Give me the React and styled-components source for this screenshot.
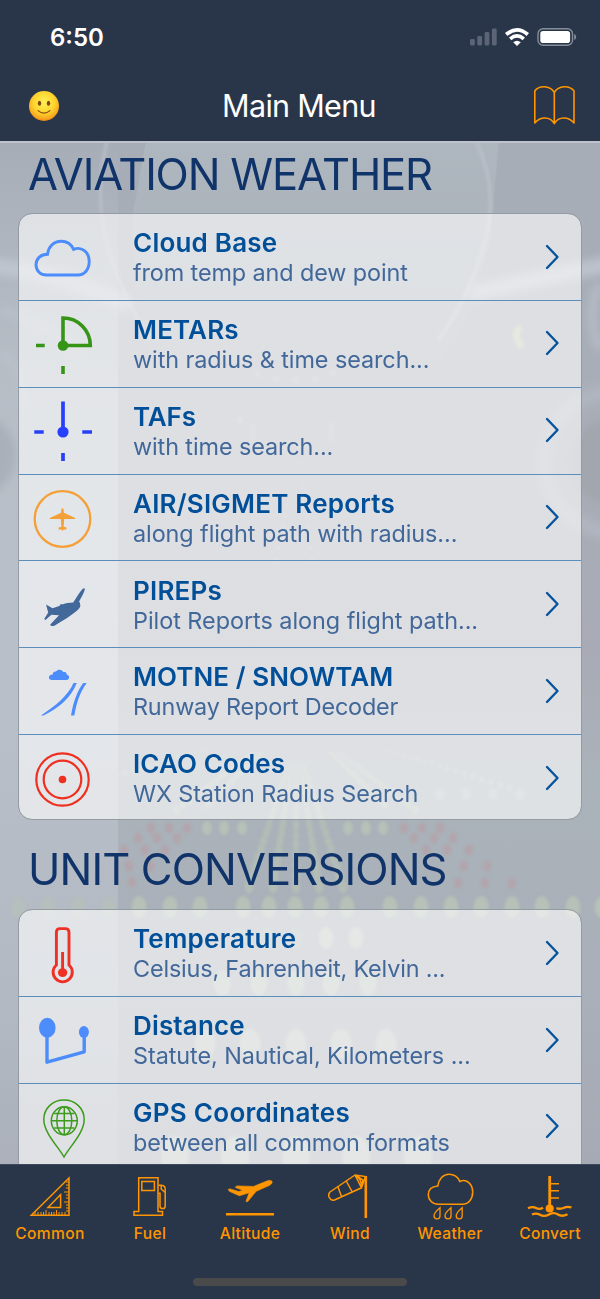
import React from "react";
import styled, { createGlobalStyle } from "styled-components";

const Global = createGlobalStyle`
  * { box-sizing: border-box; }
  body { margin: 0; background: #29364a; font-family: Inter, "Liberation Sans", sans-serif; }
`;

const Screen = styled.div`
  position: relative;
  width: 600px;
  height: 1299px;
  display: flex;
  flex-direction: column;
  overflow: hidden;
`;

const Header = styled.header`
  height: 141px;
  flex: none;
  background: #29364a;
  color: #fff;
`;

const StatusBar = styled.div`
  height: 74px;
  display: flex;
  align-items: center;
  justify-content: space-between;
  padding: 0 23px 0 50px;
`;

const Clock = styled.span`
  font-size: 24px;
  font-weight: 600;
  letter-spacing: 0;
`;

const NavBar = styled.div`
  height: 64px;
  display: grid;
  grid-template-columns: 60px 1fr 60px;
  align-items: center;
  padding: 0 16px 0 14px;
`;

const NavTitle = styled.h1`
  margin: 0;
  text-align: center;
  font-size: 30.5px;
  line-height: 36px;
  font-weight: 400;
  letter-spacing: -0.7px;
`;

const NavIcon = styled.div`
  display: flex;
  justify-content: center;
  padding-bottom: ${(p) => p.$lift || 0}px;
`;

const Content = styled.main`
  position: relative;
  flex: 1;
  min-height: 0;
  overflow: hidden;
  padding: 0 18px;
  border-top: 2px solid #bfc2cf;
`;

const Scenery = styled.svg`
  position: absolute;
  left: 0;
  top: -2px;
`;

const Section = styled.section`
  position: relative;
`;

const SectionTitle = styled.h2`
  margin: 0;
  padding: 0 0 0 10px;
  height: ${(p) => p.$height}px;
  line-height: ${(p) => p.$line}px;
  font-size: 43.5px;
  font-weight: 400;
  color: #10346a;
  letter-spacing: ${(p) => p.$spacing}px;
  white-space: nowrap;
`;

const Card = styled.div`
  width: 564px;
  border: 1px solid #959ba2;
  border-radius: 14px;
  background: rgba(255, 255, 255, 0.61);
  background-clip: padding-box;
  overflow: hidden;
`;

const rowHeights = { middle: 86.87, last: 84, cut: 110 };

const Row = styled.div`
  height: ${(p) => rowHeights[p.$place]}px;
  display: grid;
  grid-template-columns: 87px 1fr 60px;
  border-bottom: ${(p) => (p.$place === "middle" ? "1px solid #5b8dbd" : "0")};
`;

const IconCell = styled.div`
  height: 84px;
`;

const Labels = styled.div`
  padding: 14.2px 0 0 27px;
  white-space: nowrap;
`;

const Title = styled.div`
  font-size: 26px;
  font-weight: 600;
  line-height: 30px;
  letter-spacing: ${(p) => p.$ls}px;
  color: #004f98;
`;

const Subtitle = styled.div`
  font-size: 23.4px;
  line-height: 29px;
  letter-spacing: ${(p) => p.$ls}px;
  color: #42689a;
`;

const Disclosure = styled.div`
  display: flex;
  height: 85px;
  align-items: center;
  justify-content: center;
  padding-left: 2px;
`;

const TabBar = styled.nav`
  height: 135px;
  flex: none;
  display: grid;
  grid-template-columns: repeat(6, 100px);
  grid-template-rows: 86px 1fr;
  background: #29364a;
  border-top: 1px solid #3d4a5e;
`;

const Tab = styled.div`
  display: flex;
  flex-direction: column;
  align-items: center;
  padding-top: 5px;
  font-size: 15.6px;
  font-weight: 500;
  line-height: 18px;
  letter-spacing: 0.32px;
  color: #ff9500;
`;

const TabIcon = styled.svg`
  display: block;
  flex: none;
  margin-bottom: 5px;
`;

const HomeIndicator = styled.div`
  grid-column: 1 / -1;
  justify-self: center;
  width: 214px;
  height: 8px;
  margin-top: 27px;
  border-radius: 4px;
  background: #4a4a4a;
`;

const green = "#b6c1b7";
const pale = "#b3bdb6";
const red = "#b3a4ab";

function dotLine(x0, y0, x1, y1, n, r0, r1, fill) {
  return Array.from({ length: n }, (_, i) => {
    const t = i / (n - 1);
    const r = r0 + (r1 - r0) * t;
    const k = t * (0.6 + 0.4 * t);
    return (
      <ellipse key={`${x0}-${x1}-${i}`} cx={x0 + (x1 - x0) * k} cy={y0 + (y1 - y0) * k} rx={r} ry={r * 1.4} fill={fill} />
    );
  });
}

function Background() {
  const approach = [18, 48, 78, 109, 139, 170, 200, 243, 269, 295, 321, 347, 390, 421, 451, 481, 512, 542, 573, 602];
  const reds = [
    [151, 828], [169, 828], [187, 828], [138, 838], [157, 838], [177, 838], [124, 850], [145, 850], [165, 850], [129, 866],
    [150, 866], [132, 882], [404, 828], [422, 828], [440, 828], [414, 838], [434, 838], [453, 838], [426, 850], [447, 850],
    [469, 850], [464, 866], [487, 866], [458, 883], [485, 883], [512, 883],
  ];
  return (
    <Scenery width="600" height="1023" viewBox="0 141 600 1023">
      <defs>
        <linearGradient id="sky" x1="0" y1="0" x2="0" y2="1">
          <stop offset="0" stopColor="#a6adb6" />
          <stop offset=".22" stopColor="#a8aeb7" />
          <stop offset=".5" stopColor="#a8abb5" />
          <stop offset=".62" stopColor="#aab2ba" />
          <stop offset=".82" stopColor="#a9b0b9" />
          <stop offset="1" stopColor="#a6aab4" />
        </linearGradient>
        <linearGradient id="panel" x1="0" y1="0" x2="0" y2="1">
          <stop offset="0" stopColor="#c3cad4" stopOpacity="0" />
          <stop offset=".25" stopColor="#bdc5cd" stopOpacity=".7" />
          <stop offset=".55" stopColor="#b9bfc9" />
          <stop offset=".85" stopColor="#b2b9c2" />
          <stop offset="1" stopColor="#abb0ba" />
        </linearGradient>
        <linearGradient id="dome" x1="0" y1="0" x2="0" y2="1">
          <stop offset="0" stopColor="#b1bac2" stopOpacity=".7" />
          <stop offset="1" stopColor="#b1bac2" stopOpacity=".1" />
        </linearGradient>
        <filter id="soft" x="-10%" y="-10%" width="120%" height="120%">
          <feGaussianBlur stdDeviation="1.6" />
        </filter>
        <filter id="haze" x="-30%" y="-30%" width="160%" height="160%">
          <feGaussianBlur stdDeviation="4" />
        </filter>
      </defs>
      <rect x="0" y="141" width="600" height="1023" fill="url(#sky)" />
      <rect x="0" y="141" width="118" height="1023" fill="url(#panel)" />
      <path d="M146 141H499L490 240Q470 330 440 360H150Q130 290 133 213Z" fill="url(#dome)" />
      <g fill="none" filter="url(#soft)">
        <path d="M107 141Q95 190 105 236T150 340" stroke="#b9bec7" strokeWidth="3" />
        <path d="M476 141Q500 190 484 245T438 340" stroke="#bac0c9" strokeWidth="3" />
      </g>
      <g fill="none" filter="url(#haze)" opacity=".75">
        <path d="M-10 266Q60 272 130 306M610 264Q540 278 470 294" stroke="#c4cad4" strokeWidth="16" />
        <path d="M0 310Q40 320 80 350M600 285Q584 310 600 350M0 352Q24 366 26 410" stroke="#bcc2cb" strokeWidth="8" />
      </g>
      <g filter="url(#haze)">
        <circle cx="614" cy="462" r="70" fill="none" stroke="#b0b6bf" strokeWidth="14" />
        <circle cx="614" cy="462" r="44" fill="#a1a6af" />
        <circle cx="-26" cy="455" r="42" fill="#a9b0ba" />
      </g>
      <g filter="url(#soft)">
        <path d="M521 327Q514 332 517 338T522 347" fill="none" stroke="#bcc7ae" strokeWidth="7" />
        <g opacity=".7">
          {dotLine(296, 462, 276, 560, 12, 1, 2, green)}
          {dotLine(300, 462, 312, 560, 12, 1, 2, green)}
          <ellipse cx="331" cy="432" rx="2" ry="11" fill={green} />
          <ellipse cx="253" cy="432" rx="2" ry="9" fill={green} />
          {[[258, 374], [276, 379], [296, 381], [315, 379], [333, 373], [240, 419]].map(([x, y]) => (
            <circle key={x} cx={x} cy={y} r="3.2" fill={green} />
          ))}
        </g>
        {dotLine(288, 765, 249, 887, 18, 1.5, 4.5, pale)}
        {dotLine(292, 765, 273, 887, 18, 1.5, 4.5, pale)}
        {dotLine(296, 750, 296, 887, 18, 1, 4.5, pale)}
        {dotLine(300, 765, 319, 887, 18, 1.5, 4.5, pale)}
        {dotLine(304, 765, 343, 887, 18, 1.5, 4.5, pale)}
        {dotLine(362, 742, 510, 788, 22, 1, 2.5, pale)}
        {dotLine(230, 742, 90, 784, 22, 1, 2.5, pale)}
        {dotLine(330, 752, 385, 805, 18, 1.5, 3, pale)}
        {dotLine(338, 752, 415, 810, 18, 1.5, 3, pale)}
        {dotLine(262, 752, 207, 805, 18, 1.5, 3, pale)}
        {dotLine(254, 752, 177, 810, 18, 1.5, 3, pale)}
        {reds.map(([x, y]) => (
          <ellipse key={`${x}-${y}`} cx={x} cy={y} rx="4" ry="5.4" fill={red} />
        ))}
        {[207, 224, 242, 348, 366, 383].map((x) => (
          <ellipse key={x} cx={x} cy="828" rx="5" ry="7" fill={green} />
        ))}
        {[440, 466, 493, 520].map((x) => (
          <ellipse key={x} cx={x} cy="794" rx="4.5" ry="6" fill="#b2bcc6" />
        ))}
        {approach.map((x) => (
          <ellipse key={x} cx={x} cy="907" rx="7.5" ry="11" fill={green} opacity={x < 118 ? 0.6 : 1} />
        ))}
        {[237, 266, 296, 326, 356].map((x) => (
          <ellipse key={x} cx={x} cy="938" rx="7.5" ry="11" fill={x > 300 ? "#bbc4bd" : "#afb8b9"} />
        ))}
        {[222, 259, 296, 331, 368].map((x) => (
          <ellipse key={x} cx={x} cy="983" rx="8.5" ry="13" fill="#bac3bc" />
        ))}
        {[205, 250, 296, 341, 386].map((x) => (
          <ellipse key={x} cx={x} cy="1044" rx="10.5" ry="15" fill="#b9c2bb" />
        ))}
        {[175, 235, 296, 356, 418].map((x) => (
          <ellipse key={x} cx={x} cy="1156" rx="14" ry="20" fill="#b9c2bc" />
        ))}
      </g>
    </Scenery>
  );
}

const blue = "#4c8cfb";

const icons = {
  cloud: (
    <path
      d="M46.5 275C40.5 275 36 271 36 264.8C36 258.5 41 254.2 47.5 254.2C48.5 246.5 54 241.2 61.2 241.2C67.2 241.2 71.4 244.4 73.6 249.4C81.5 246 89.2 252 89.2 261.5C89.2 269.5 84.5 275 78 275Z"
      fill="none"
      stroke={blue}
      strokeWidth="2.9"
    />
  ),
  metar: (
    <g stroke="#369417" strokeWidth="3.6" fill="none">
      <path d="M63 345.5V318C78 318 90.3 330 90.3 345.5Z" />
      <path d="M36 345.5H44.7M63 366V374" />
      <circle cx="63" cy="345.5" r="5.3" fill="#369417" stroke="none" />
    </g>
  ),
  taf: (
    <g stroke="#2740fb" strokeWidth="3.7">
      <path d="M63 401.5V432M34.3 432H43.7M82.3 432H92M63 453V461" />
      <circle cx="63" cy="432" r="5.6" fill="#2740fb" stroke="none" />
    </g>
  ),
  sigmet: (
    <g>
      <circle cx="62.5" cy="519" r="27.8" fill="none" stroke="#f4a038" strokeWidth="2.3" />
      <path
        d="M62.5 508Q61.1 508.6 61.1 512.8L49.8 518V519H60.8L61.4 526.8L58.6 527.4V529.6H61.4L62.5 531L63.6 529.6H66.4V527.4L63.6 526.8L64.2 519H75.2V518L63.9 512.8Q63.9 508.6 62.5 508Z"
        fill="#f4a038"
      />
    </g>
  ),
  pirep: (
    <path
      d="M84.5 588.2C82.5 587.8 79.6 592.2 73.2 602.5C69.2 602.8 65.5 603.1 63 604.2C61.6 604 59.8 604.2 59.5 604.8L60 605.7L52.5 608.3L46 604.5L48.2 612.5L44.2 619L45.5 620L51.4 614.8L59 615.2L50.3 624.4C50.5 626.5 53 626.1 54.8 625.4C62 621 70.8 616 77.2 610.4C79.8 608.2 81 606.3 80 603.5C79.8 602.4 79.6 602.2 79 601.8C81.6 596.8 84.8 591.4 84.8 589Z"
      fill="#42699a"
    />
  ),
  motne: (
    <g fill={blue}>
      <path d="M52 680C47.7 680 47.9 674.4 52.8 674.5C52.8 671.5 55 671.1 56 671.6C58 668.5 62.8 669.8 63.2 672.3C65.4 671.4 67 672.8 66.6 674.6C70 675.2 70 680 66.5 680Z" />
      <path d="M73.5 683H76.8C71 697.5 59 708 43.5 715.5H41C55.5 706 68.5 695 73.5 683ZM83.2 683H86.7C80.5 691.5 76.9 701 74.3 715.5H71C73.5 701 77.5 690.5 83.2 683Z" />
    </g>
  ),
  icao: (
    <g fill="none" stroke="#ef3021" strokeWidth="2.2">
      <circle cx="62.5" cy="779.5" r="26.2" />
      <circle cx="62.5" cy="779.5" r="18.8" />
      <circle cx="62.5" cy="779.5" r="3.8" fill="#ef3021" stroke="none" />
    </g>
  ),
  temperature: (
    <g fill="none" stroke="#ee3124" strokeWidth="2.9">
      <path d="M56.4 965V932.5Q56.4 928.6 60 928.6H65.2Q69 928.6 69 932.5V965A9.6 9.6 0 1 1 56.4 965Z" />
      <path d="M62.6 952V970" />
      <ellipse cx="62.6" cy="972.6" rx="4.7" ry="4.3" fill="#ee3124" stroke="none" />
    </g>
  ),
  distance: (
    <g fill={blue}>
      <ellipse cx="47.3" cy="1027.8" rx="8.3" ry="10" />
      <ellipse cx="83.9" cy="1032" rx="5" ry="6" />
      <path d="M47 1030V1062.2L84.2 1051.8V1034" fill="none" stroke={blue} strokeWidth="3.4" strokeLinejoin="round" />
    </g>
  ),
  gps: (
    <g fill="none" stroke="#3c9b1c" strokeWidth="1.5">
      <path d="M64 1157C59 1147.5 43.8 1133 43.8 1119.5C43.8 1108.5 52.5 1100 64 1100S84.2 1108.5 84.2 1119.5C84.2 1133 69 1147.5 64 1157Z" />
      <ellipse cx="64.3" cy="1120.8" rx="13" ry="14" />
      <path d="M64.3 1106.8V1134.8M51.3 1120.8H77.3M54.2 1113.5H74.4M54.2 1128H74.4" />
      <ellipse cx="64.3" cy="1120.8" rx="7.5" ry="14" />
    </g>
  ),
};

const weather = [
  ["cloud", "Cloud Base", "from temp and dew point", 0.22, -0.11],
  ["metar", "METARs", "with radius & time search...", 0.15, -0.07],
  ["taf", "TAFs", "with time search...", -0.1, -0.1],
  ["sigmet", "AIR/SIGMET Reports", "along flight path with radius...", 0.22, -0.08],
  ["pirep", "PIREPs", "Pilot Reports along flight path...", 0.22, -0.03],
  ["motne", "MOTNE / SNOWTAM", "Runway Report Decoder", 0.07, -0.19],
  ["icao", "ICAO Codes", "WX Station Radius Search", 0.12, -0.1],
];

const conversions = [
  ["temperature", "Temperature", "Celsius, Fahrenheit, Kelvin ...", 0.23, -0.17],
  ["distance", "Distance", "Statute, Nautical, Kilometers ...", 0.16, -0.07],
  ["gps", "GPS Coordinates", "between all common formats", 0.29, -0.16],
];

function Menu({ items, top, cut }) {
  return (
    <Card>
      {items.map(([icon, title, subtitle, tls, sls], i) => (
        <Row key={icon} $place={i < items.length - 1 ? "middle" : cut ? "cut" : "last"}>
          <IconCell>
            <svg width="87" height="84" viewBox={`19 ${Math.round(top + i * 86.87)} 87 84`}>
              {icons[icon]}
            </svg>
          </IconCell>
          <Labels>
            <Title $ls={tls}>{title}</Title>
            <Subtitle $ls={sls}>{subtitle}</Subtitle>
          </Labels>
          <Disclosure>
            <svg width="16" height="26" viewBox="0 0 16 26">
              <path d="M3 2L13.5 13L3 24" fill="none" stroke="#07539c" strokeWidth="2.4" strokeLinecap="round" strokeLinejoin="round" />
            </svg>
          </Disclosure>
        </Row>
      ))}
    </Card>
  );
}

const rulerTicks = [
  [35, 4], [38, 3], [41, 3], [43.5, 3], [46, 5], [49, 3], [51.5, 3], [54, 3], [56.5, 5], [59, 3], [62, 3], [65, 3],
].map(([x, h]) => `M${x} 1214v-${h}`).join("");
const sideTicks = [
  [1181, 3], [1184, 3], [1187, 3], [1191, 5], [1194, 3], [1197, 3], [1201, 5], [1204, 3], [1207, 3], [1210, 3],
].map(([y, w]) => `M69 ${y}h-${w}`).join("");

const tabs = [
  ["Common",
    <g key="i" strokeWidth="1.5">
      <path d="M69 1177V1214.3H31.3Z M60.6 1193.5V1206.4H48Z" />
      <path d={rulerTicks + sideTicks} strokeWidth="1" />
    </g>],
  ["Fuel",
    <g key="i" strokeWidth="1.5">
      <path d="M138.7 1210.5V1176.7H158V1210.5H162.5V1214.2H134V1210.5Z M141.8 1180.5H154.4V1189.5H141.8Z" />
      <path d="M158 1192.2H160V1205Q160 1207.6 162.7 1207.6Q165.2 1207.6 165.2 1205V1188Q165.2 1184.7 161.5 1184.3H158.5M161.2 1184.5V1188L164.8 1191.2" />
    </g>],
  ["Altitude",
    <g key="i">
      <path d="M226 1213.3H274" strokeWidth="2.6" />
      <path d="M228.3 1188.2L230.2 1187.9L238.8 1190.6L242.8 1189.3L235.3 1186.4L236.6 1184.9L253.6 1185.4L267.4 1179.8C270 1179 272.2 1179.4 272.2 1181C272.2 1182.5 270.8 1183.7 269.2 1184.5L256.2 1190.3L247.6 1200.7L245.9 1200.4L249.1 1191.8L239.3 1194.8L229.2 1190.2Z" fill="#ff9500" strokeWidth=".6" />
    </g>],
  ["Wind",
    <g key="i" strokeWidth="1.5">
      <path d="M365.8 1175V1217" strokeWidth="2.6" />
      <path d="M355 1174L330 1191Q328 1193 329 1196Q331 1200 334.5 1199L361.5 1186.8ZM355 1174Q362 1178 361.5 1186.8M355 1174L365.5 1175.5L361.5 1186.8M356 1174.5L363 1179L361.2 1185M338 1186L341.5 1195.5M346.5 1180.5L352 1190.5" />
    </g>],
  ["Weather",
    <g key="i" strokeWidth="1.6">
      <path d="M438.5 1203.3C432.5 1203.3 428.3 1199 428.3 1194C428.3 1188.5 432 1185.4 437.8 1185C438.8 1178 443 1173.2 449 1173.2C454 1173.2 458 1176 459.8 1180.4C466.5 1177.4 472.7 1183 472.7 1191C472.7 1198 468.5 1203.3 462.5 1203.3Z" />
      {[437, 448, 459.2].map((x) => (
        <path key={x} d={`M${x + 3} 1206.7C${x} 1209.2 ${x - 3} 1211.7 ${x - 3} 1214.8A3 3 0 0 0 ${x + 3} 1215Z`} strokeWidth="1.3" />
      ))}
    </g>],
  ["Convert",
    <g key="i">
      <path d="M549.7 1175V1207" strokeWidth="2.8" />
      <path d="M550 1182.7H559M550 1189.7H559M550 1197H559" strokeWidth="1.6" />
      <circle cx="549.7" cy="1207.5" r="4.1" fill="#ff9500" stroke="none" />
      <path d="M528 1207.3Q532.5 1205 536 1206.9T543 1206.7M556.4 1207.2Q560.5 1208.5 564 1206.8T571.5 1206.5M532 1213.5Q536 1211.5 540 1213.8T549 1213.5T558 1213.5T567.5 1213.2" strokeWidth="2.3" />
    </g>],
];

function StatusIcons() {
  return (
    <svg width="112" height="24" viewBox="465 25 112 24">
      <g fill="#5b6577">
        <rect x="470" y="39" width="4.8" height="6.5" rx="1.4" />
        <rect x="477.3" y="36" width="4.8" height="9.5" rx="1.4" />
        <rect x="484.6" y="32" width="4.8" height="13.5" rx="1.4" />
        <rect x="491.9" y="28.5" width="4.8" height="17" rx="1.4" />
      </g>
      <g fill="none" stroke="#fff" strokeWidth="3.7">
        <path d="M506.2 34.5Q517 25.1 527.8 34.5" />
        <path d="M510.2 38.9Q517 33 523.8 38.9" />
      </g>
      <path d="M513.2 42.3Q517 39.3 520.8 42.3L517 46Z" fill="#fff" />
      <rect x="538" y="28.8" width="34.5" height="16.4" rx="5" fill="none" stroke="#858d99" strokeWidth="1.4" />
      <rect x="540.3" y="31" width="29.8" height="12" rx="2.8" fill="#fff" />
      <path d="M574.2 34V40Q576.2 39.4 576.2 37T574.2 34Z" fill="#858d99" />
    </svg>
  );
}

function Smiley() {
  return (
    <svg width="30" height="30" viewBox="0 0 30 30">
      <defs>
        <radialGradient id="face" cx=".5" cy=".38" r=".63">
          <stop offset="0" stopColor="#fff05b" />
          <stop offset=".55" stopColor="#ffd52e" />
          <stop offset=".85" stopColor="#f9a91f" />
          <stop offset="1" stopColor="#e98312" />
        </radialGradient>
      </defs>
      <circle cx="15" cy="15" r="15" fill="url(#face)" />
      <ellipse cx="10.5" cy="12.2" rx="1.7" ry="2.5" fill="#80480f" />
      <ellipse cx="19.5" cy="12.2" rx="1.7" ry="2.5" fill="#80480f" />
      <path d="M9 19.6Q15 24.5 21 19.6" fill="none" stroke="#8c4f0e" strokeWidth="1.2" strokeLinecap="round" />
    </svg>
  );
}

export default function App() {
  return (
    <Screen>
      <Global />
      <Header>
        <StatusBar>
          <Clock>6:50</Clock>
          <StatusIcons />
        </StatusBar>
        <NavBar>
          <NavIcon $lift={1}><Smiley /></NavIcon>
          <NavTitle>Main Menu</NavTitle>
          <NavIcon $lift={2}>
            <svg width="44" height="42" viewBox="532 84 44 42">
              <path
                d="M554.3 92.5C550 84.8 538.5 85.4 534.8 91V123C540 116.5 550 115.8 554.3 123.7C558.6 115.8 568.8 116.5 574 123V91C570 85.4 558.6 84.8 554.3 92.5ZM554.3 92.5V123.5"
                fill="none"
                stroke="#ff9500"
                strokeWidth="1.6"
                strokeLinejoin="round"
              />
            </svg>
          </NavIcon>
        </NavBar>
      </Header>
      <Content>
        <Background />
        <Section>
          <SectionTitle $height={70} $line={62} $spacing={-1.2}>AVIATION WEATHER</SectionTitle>
          <Menu items={weather} top={214} />
        </Section>
        <Section>
          <SectionTitle $height={89} $line={99} $spacing={-0.88}>UNIT CONVERSIONS</SectionTitle>
          <Menu items={conversions} top={910} cut />
        </Section>
      </Content>
      <TabBar>
        {tabs.map(([label, art], i) => (
          <Tab key={label}>
            <TabIcon width="60" height="50" viewBox={`${20 + i * 100} 1169 60 50`} fill="none" stroke="#ff9500">
              {art}
            </TabIcon>
            {label}
          </Tab>
        ))}
        <HomeIndicator />
      </TabBar>
    </Screen>
  );
}
